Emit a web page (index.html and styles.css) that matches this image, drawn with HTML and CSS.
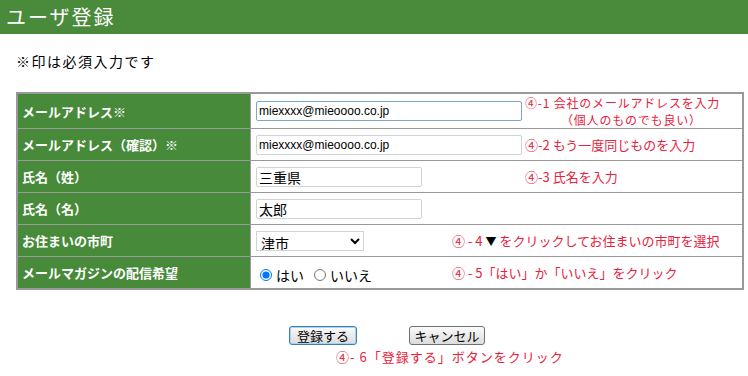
FILE: index.html
```
<!DOCTYPE html>
<html>
<head>
    <title>ユーザ登録</title>
    <meta charset="utf-8">
    <link rel="stylesheet" href="styles.css">
</head>
<body>
    <h1 class="title">ユーザ登録</h1>

    <p class="required">※印は必須入力です</p>

    <table class="form">
        <tr>
            <th>メールアドレス※</th>
            <td>
                <div class="field">
                    <div class="ctrl wide"><input class="text long focus" type="text" value="miexxxx@mieoooo.co.jp"></div>
                    <div class="note two">
                        <div class="line">④-1 会社のメールアドレスを入力</div>
                        <div class="line sub">（個人のものでも良い）</div>
                    </div>
                </div>
            </td>
        </tr>
        <tr>
            <th>メールアドレス（確認）※</th>
            <td>
                <div class="field">
                    <div class="ctrl wide"><input class="text long" type="text" value="miexxxx@mieoooo.co.jp"></div>
                    <div class="note">④-2 もう一度同じものを入力</div>
                </div>
            </td>
        </tr>
        <tr>
            <th>氏名（姓）</th>
            <td>
                <div class="field">
                    <div class="ctrl wide"><input class="text short jp" type="text" value="三重県"></div>
                    <div class="note">④-3 氏名を入力</div>
                </div>
            </td>
        </tr>
        <tr>
            <th>氏名（名）</th>
            <td>
                <div class="field">
                    <div class="ctrl wide"><input class="text short jp" type="text" value="太郎"></div>
                </div>
            </td>
        </tr>
        <tr>
            <th>お住まいの市町</th>
            <td>
                <div class="field">
                    <div class="ctrl narrow">
                        <select class="city">
                            <option>津市</option>
                        </select>
                    </div>
                    <div class="note">④ - 4 <span class="arrow">▼</span> をクリックしてお住まいの市町を選択</div>
                </div>
            </td>
        </tr>
        <tr>
            <th>メールマガジンの配信希望</th>
            <td>
                <div class="field">
                    <div class="ctrl narrow radios">
                        <label><input type="radio" name="mag" checked> はい</label>
                        <label><input type="radio" name="mag"> いいえ</label>
                    </div>
                    <div class="note">④ - 5「はい」か「いいえ」をクリック</div>
                </div>
            </td>
        </tr>
    </table>

    <div class="buttons">
        <button class="btn primary">登録する</button>
        <button class="btn">キャンセル</button>
    </div>
    <div class="btn-note">④- 6「登録する」ボタンをクリック</div>
</body>
</html>
```

FILE: styles.css
```
body {
    margin: 0;
    background: #fff;
    font-family: "Noto Sans CJK JP", "DejaVu Sans", sans-serif;
    color: #000;
}
.title {
    margin: 0;
    height: 34px;
    line-height: 34px;
    padding-left: 6px;
    background: #4a8a3b;
    color: #fff;
    font-size: 20px;
    font-weight: normal;
    letter-spacing: 2px;
}
.required {
    margin: 17px 0 0 16px;
    font-size: 14px;
    letter-spacing: 1.5px;
    line-height: 20px;
    height: 22px;
}
.form {
    margin: 19px 0 0 16px;
    width: 728px;
    border-collapse: collapse;
    border: 2px solid #999;
}
.form th, .form td {
    border: 1px solid #999;
    height: 31px;
    padding: 0;
}
.form th {
    width: 228px;
    background: #478a3a;
    color: #fff;
    font-size: 13px;
    text-align: left;
    padding-left: 4px;
}
.form td {
    padding-left: 5px;
}
.field {
    display: flex;
    align-items: center;
}
.ctrl.wide { width: 269px; flex: none; }
.ctrl.narrow { width: 196px; flex: none; }
.text {
    box-sizing: border-box;
    height: 20px;
    border: 1px solid #cfd4dc;
    border-radius: 2px;
    padding: 0 2px;
    font-family: "Liberation Sans", sans-serif;
    font-size: 12px;
    outline: none;
    display: block;
}
.text.jp {
    font-family: "Noto Sans CJK JP", sans-serif;
    font-size: 14px;
}
.text.long { width: 266px; }
.text.short { width: 166px; }
.text.focus { border-color: #7aa7cf; }
.city {
    display: block;
    width: 108px;
    height: 20px;
    font-family: "Noto Sans CJK JP", sans-serif;
    font-size: 14px;
    border: 1px solid #cfd4dc;
    background: #fff;
}
.radios {
    display: flex;
    gap: 6px;
    font-size: 14px;
    padding-top: 4px;
}
.radios label {
    display: flex;
    align-items: center;
    gap: 4px;
}
.radios input {
    margin: 0 0 0 4px;
    width: 12px;
    height: 12px;
}
.note {
    color: #e8213c;
    font-size: 13px;
    line-height: 16px;
    white-space: nowrap;
}
.note.two {
    display: flex;
    flex-direction: column;
}
.note.two .line {
    font-size: 12px;
    line-height: 17px;
    letter-spacing: 0.8px;
}
.note.two .sub {
    padding-left: 36px;
}
.arrow {
    color: #000;
    font-size: 11px;
}
.buttons {
    display: flex;
    justify-content: center;
    gap: 52px;
    padding-left: 26px;
    margin-top: 36px;
}
.btn {
    height: 19px;
    padding: 0;
    white-space: nowrap;
    font-family: "Noto Sans CJK JP", sans-serif;
    font-size: 13px;
    line-height: 15px;
    border: 1px solid #707070;
    border-radius: 3px;
    background: linear-gradient(#fafafa, #dcdcdc);
    color: #000;
}
.btn.primary {
    width: 68px;
    border-color: #3c7fb1;
    box-shadow: inset 0 0 0 1px #a8d4f0;
}
.btn:not(.primary) { width: 76px; }
.btn-note {
    margin: 3px 0 0 336px;
    color: #e8213c;
    font-size: 13px;
    line-height: 18px;
    letter-spacing: 1px;
}
```
